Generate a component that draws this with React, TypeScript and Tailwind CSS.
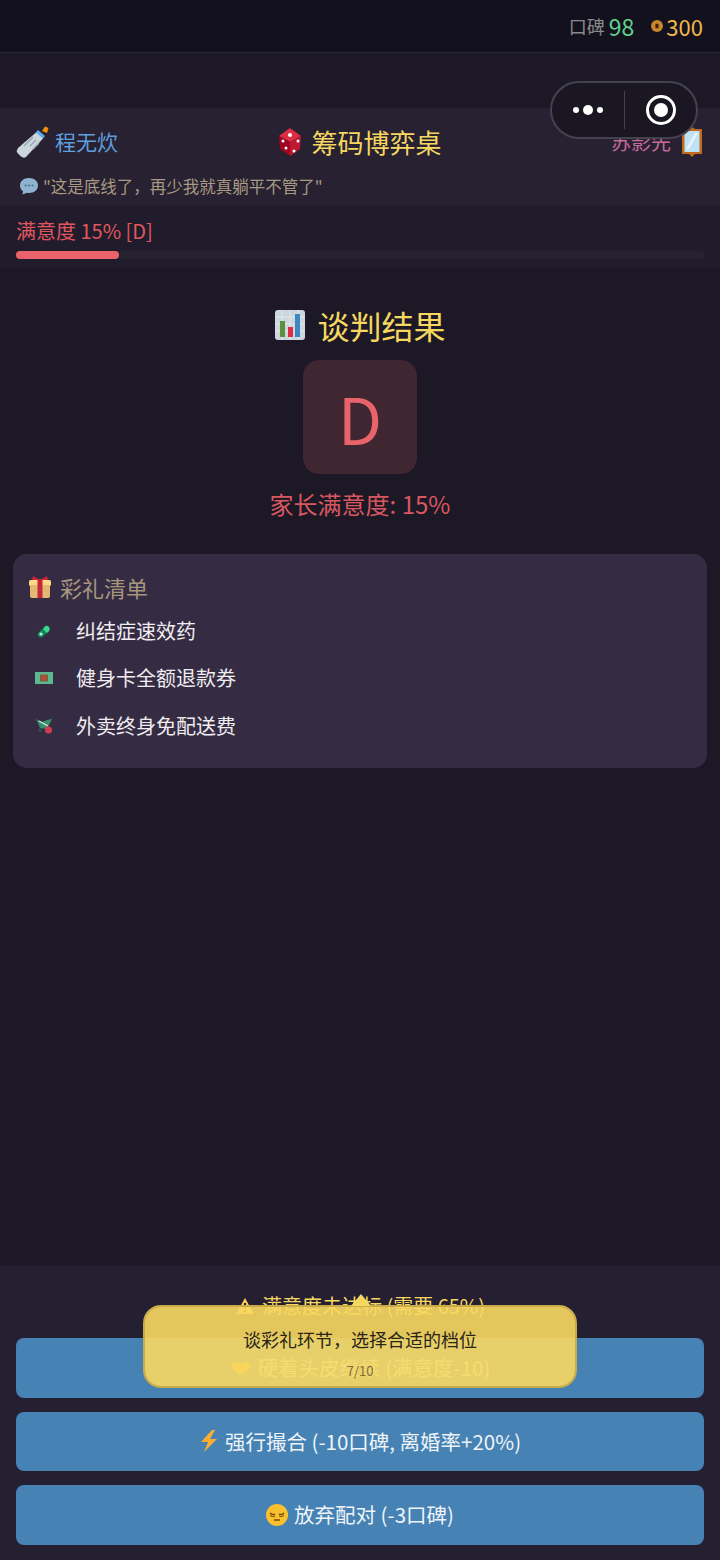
import React from "react";

const FONT = '"Noto Sans CJK SC", Inter, sans-serif';

const Bottle = () => (
  <svg width="34" height="34" viewBox="0 0 34 34" className="shrink-0">
    <path d="M26 6 L29 1.5 L32.5 3 L31 8 Z" fill="#f4900c" />
    <path d="M22 5 L29 11 L26.5 14 L19.5 8 Z" fill="#5dadec" />
    <path d="M20 7.5 L27 13.5 L10 32 Q7.5 33.5 5 31.5 L1.5 28 Q0 25.5 2 23 Z" fill="#ccd6dd" />
    <path d="M11 18 L17 12 M14 21 L20 15 M17 24 L23 18 M8 21 L14 15" stroke="#99aab5" strokeWidth="1.6" />
  </svg>
);
const Die = () => (
  <svg width="24" height="30" viewBox="0 0 24 30" className="shrink-0">
    <path d="M12 1 L23 9 L12 15 L1 9 Z" fill="#dd2e44" />
    <path d="M1 9 L12 15 L12 29 L2 22 Z" fill="#a0041e" />
    <path d="M23 9 L12 15 L12 29 L22 22 Z" fill="#be1931" />
    <circle cx="12" cy="8" r="2" fill="#fff" />
    <circle cx="5" cy="14" r="1.5" fill="#fff" />
    <circle cx="8" cy="21" r="1.5" fill="#fff" />
    <circle cx="16" cy="24" r="1.5" fill="#fff" />
    <circle cx="20" cy="14" r="1.5" fill="#fff" />
  </svg>
);
const Mirror = () => (
  <svg width="24" height="30" viewBox="0 0 24 30" className="shrink-0">
    <path d="M12 0 L15 2 H22 V27 H15 L12 30 L9 27 H2 V2 H9 Z" fill="#c1691c" />
    <rect x="4.5" y="4" width="15" height="21" fill="#bde3f5" />
    <path d="M6 22 L15 6 H18 L9 22 Z" fill="#e8f6fc" />
  </svg>
);
const Bubble = () => (
  <svg width="20" height="20" viewBox="0 0 20 20" className="shrink-0">
    <path d="M10 2 C4.5 2 1 5.3 1 9.5 C1 12 2.2 14 4 15.2 L3.5 18.5 L8 16.8 C8.7 16.9 9.3 17 10 17 C15.5 17 19 13.7 19 9.5 C19 5.3 15.5 2 10 2 Z" fill="#8fb3d0" />
    <circle cx="6.5" cy="9.5" r="1" fill="#4a6a85" />
    <circle cx="10" cy="9.5" r="1" fill="#4a6a85" />
    <circle cx="13.5" cy="9.5" r="1" fill="#4a6a85" />
  </svg>
);
const Coin = () => (
  <svg width="12" height="12" viewBox="0 0 12 12" className="shrink-0">
    <circle cx="6" cy="6" r="6" fill="#c8862a" />
    <rect x="4.4" y="3.8" width="3.2" height="4.4" rx="1" fill="#3a2410" />
  </svg>
);
const Chart = () => (
  <svg width="32" height="32" viewBox="0 0 32 32" className="shrink-0">
    <rect x="1" y="1" width="30" height="30" rx="3" fill="#ccd6dd" />
    <path d="M1 8 H31 M1 15 H31 M1 22 H31 M8 1 V31 M16 1 V31 M24 1 V31" stroke="#e1e8ed" strokeWidth="1" />
    <rect x="6" y="12" width="5" height="16" fill="#5c913b" />
    <rect x="14" y="18" width="5" height="10" fill="#dd2e44" />
    <rect x="21" y="5" width="5" height="23" fill="#3b88c3" />
  </svg>
);
const Gift = () => (
  <svg width="24" height="24" viewBox="0 0 24 24" className="shrink-0">
    <rect x="1" y="5" width="22" height="6" rx="1.5" fill="#fdd888" />
    <rect x="2" y="10" width="20" height="13" rx="2" fill="#e3b875" />
    <rect x="9.5" y="4" width="5" height="19" fill="#c6273a" />
    <path d="M12 5 L5 1 L4 5 Z M12 5 L19 1 L20 5 Z" fill="#c6273a" />
  </svg>
);
const Pill = () => (
  <svg width="16" height="16" viewBox="0 0 16 16" className="shrink-0">
    <path d="M2 10 L9 3.5 Q11 2 13 4 Q14.5 6 13 8 L6.5 14 Q4 15 2.5 13.5 Q1 12 2 10 Z" fill="#0f8a5c" />
    <path d="M9 3.5 Q11 2 13 4 Q14.5 6 13 8 L11 10 L7 6 Z" fill="#3dd68c" />
    <circle cx="5" cy="11" r="1.6" fill="#bff0d8" />
  </svg>
);
const Ticket = () => (
  <svg width="18" height="12" viewBox="0 0 18 12" className="shrink-0">
    <rect width="18" height="12" fill="#5cb88f" />
    <rect x="5" y="2.5" width="8" height="7" fill="#8a5a3c" />
    <circle cx="9" cy="6" r="2" fill="#c8453c" />
  </svg>
);
const Delivery = () => (
  <svg width="18" height="18" viewBox="0 0 18 18" className="shrink-0">
    <path d="M1 2 L7 5 L12 3 L17 2 L14 8 L11 12 L5 11 L3 6 Z" fill="#3a8f6a" />
    <path d="M4 4 L13 9" stroke="#d8e6df" strokeWidth="1.4" />
    <circle cx="13.5" cy="13" r="3.5" fill="#d23b4b" />
    <circle cx="5" cy="13" r="2" fill="#37474f" />
  </svg>
);
const Warn = () => (
  <svg width="20" height="18" viewBox="0 0 20 18" className="shrink-0">
    <path d="M10 1 L19 17 H1 Z" fill="#ffcc4d" />
    <rect x="9" y="6" width="2" height="6" fill="#231f20" />
    <rect x="9" y="13.2" width="2" height="2" fill="#231f20" />
  </svg>
);
const Handshake = () => (
  <svg width="22" height="14" viewBox="0 0 22 14" className="shrink-0">
    <path d="M1 3 L6 1 L11 3 L16 1 L21 3 L19 8 L12 13 L9 13 L3 8 Z" fill="#f9c22e" />
  </svg>
);
const Bolt = () => (
  <svg width="20" height="24" viewBox="0 0 20 24" className="shrink-0">
    <path d="M13 1 L2 13 H9 L5 23 L18 10 H11 L16 1 Z" fill="#ffac33" />
  </svg>
);
const Pensive = () => (
  <svg width="22" height="22" viewBox="0 0 22 22" className="shrink-0">
    <circle cx="11" cy="11" r="11" fill="#fbc02d" />
    <path d="M4 9 Q6.5 11.5 9 10 M13 10 Q15.5 11.5 18 9" stroke="#664500" strokeWidth="1.3" fill="none" />
    <path d="M4 11.5 Q6.5 13.5 9 12 M13 12 Q15.5 13.5 18 11.5" stroke="#664500" strokeWidth="1" fill="none" />
    <path d="M8 16 H14" stroke="#664500" strokeWidth="1.4" />
  </svg>
);

function Gift2({ icon, text }: { icon: React.ReactNode; text: string }) {
  return (
    <div className="flex h-[47.5px] items-center">
      <div className="flex w-[34px] justify-center">{icon}</div>
      <span className="ml-[15px] text-[20px] leading-none text-[#f0ecf0]">{text}</span>
    </div>
  );
}

function Btn({ icon, text }: { icon?: React.ReactNode; text: string }) {
  return (
    <div className="flex h-[59.5px] items-center justify-center gap-[6px] rounded-[8px] bg-[#4682b4] text-[20.5px] text-[#eef4f8]">
      {icon}
      <span>{text}</span>
    </div>
  );
}

export default function App() {
  return (
    <div className="relative flex h-[1560px] w-[720px] flex-col overflow-hidden bg-[#1c1826]" style={{ fontFamily: FONT }}>
      <div className="flex h-[53px] items-center justify-end border-b border-[#2a2636] bg-[#14111e] pr-[17px]">
        <span className="text-[18px] text-[#8a8a8a]">口碑</span>
        <span className="ml-[4px] text-[23px] text-[#5fd38d]">98</span>
        <span className="ml-[17px]"><Coin /></span>
        <span className="ml-[3px] text-[22px] text-[#f2b84b]">300</span>
      </div>
      <div className="h-[55px]" />
      <div className="h-[98px] bg-[#272132] px-[16px]">
        <div className="flex h-[67px] items-center justify-between">
          <div className="flex w-[200px] items-center gap-[5px]">
            <Bottle />
            <span className="text-[21px] text-[#5f9fde]">程无炊</span>
          </div>
          <div className="flex items-center gap-[9px]">
            <Die />
            <span className="text-[26px] text-[#f6d860]">筹码博弈桌</span>
          </div>
          <div className="flex w-[200px] items-center justify-end gap-[9px]">
            <span className="text-[20px] text-[#c76a9c]">苏影先</span>
            <Mirror />
          </div>
        </div>
        <div className="flex items-center gap-[4px] pl-[3px] text-[16.5px] leading-[22px] text-[#a89a80]">
          <Bubble />
          <span>"这是底线了，再少我就真躺平不管了"</span>
        </div>
      </div>
      <div className="h-[62px] bg-[#211c2b] px-[16px] pt-[11px]">
        <div className="text-[20px] leading-[27px] text-[#e0575f]">满意度 15% [D]</div>
        <div className="mt-[7px] h-[8px] rounded-full bg-[#272230]">
          <div className="h-full w-[15%] rounded-full bg-[#e8636a]" />
        </div>
      </div>
      <main className="flex flex-1 flex-col items-center px-[13px] pt-[36px]">
        <div className="flex h-[42px] items-center gap-[11px]">
          <Chart />
          <span className="text-[32px] leading-none text-[#f6d860]">谈判结果</span>
        </div>
        <div className="mt-[14px] flex h-[114px] w-[114px] items-center justify-center rounded-[16px] bg-[#3f2630] text-[64px] leading-none text-[#e8636a]">D</div>
        <div className="mt-[14px] text-[24px] leading-[32px] text-[#d9575f]">家长满意度: 15%</div>
        <div className="mt-[34px] h-[214px] w-full rounded-[14px] bg-[#352c44] px-[14px] pt-[13px]">
          <div className="flex h-[40px] items-center gap-[8px] pl-[1px]">
            <Gift />
            <span className="text-[22px] text-[#a8977c]">彩礼清单</span>
          </div>
          <Gift2 icon={<Pill />} text="纠结症速效药" />
          <Gift2 icon={<Ticket />} text="健身卡全额退款券" />
          <Gift2 icon={<Delivery />} text="外卖终身免配送费" />
        </div>
      </main>
      <div className="h-[294px] bg-[#251f32] px-[16px]">
        <div className="flex h-[72px] items-center justify-center gap-[7px] pt-[8px] text-[20px] text-[#f6d860]">
          <Warn />
          <span>满意度未达标 (需要 65%)</span>
        </div>
        <div className="flex flex-col gap-[14px]">
          <Btn icon={<Handshake />} text="硬着头皮继续 (满意度-10)" />
          <Btn icon={<Bolt />} text="强行撮合 (-10口碑, 离婚率+20%)" />
          <Btn icon={<Pensive />} text="放弃配对 (-3口碑)" />
        </div>
      </div>

      <div className="absolute left-[550px] top-[81px] flex h-[58px] w-[148px] items-center rounded-full border-2 border-[#45424f] bg-[#1a1723]">
        <div className="flex w-[72px] items-center justify-center gap-[4px]">
          <span className="h-[6px] w-[6px] rounded-full bg-white" />
          <span className="h-[10px] w-[10px] rounded-full bg-white" />
          <span className="h-[6px] w-[6px] rounded-full bg-white" />
        </div>
        <div className="h-[38px] w-px bg-[#45424f]" />
        <div className="flex flex-1 items-center justify-center">
          <div className="flex h-[30px] w-[30px] items-center justify-center rounded-full border-[3px] border-white">
            <span className="h-[14px] w-[14px] rounded-full bg-white" />
          </div>
        </div>
      </div>

      <div className="absolute left-[143px] top-[1305px] flex h-[83px] w-[434px] flex-col items-center rounded-[18px] border-2 border-[#c8aa48] bg-[#f8d860]/90">
        <div className="absolute left-[206px] top-[-13px] h-0 w-0 border-x-[10px] border-b-[12px] border-x-transparent border-b-[#f6d860]" />
        <div className="mt-[19px] text-[18px] leading-[26px] text-[#2a2418]">谈彩礼环节，选择合适的档位</div>
        <div className="mt-[10px] text-[13px] leading-[18px] text-[#7e6c3c]">7/10</div>
      </div>
    </div>
  );
}
